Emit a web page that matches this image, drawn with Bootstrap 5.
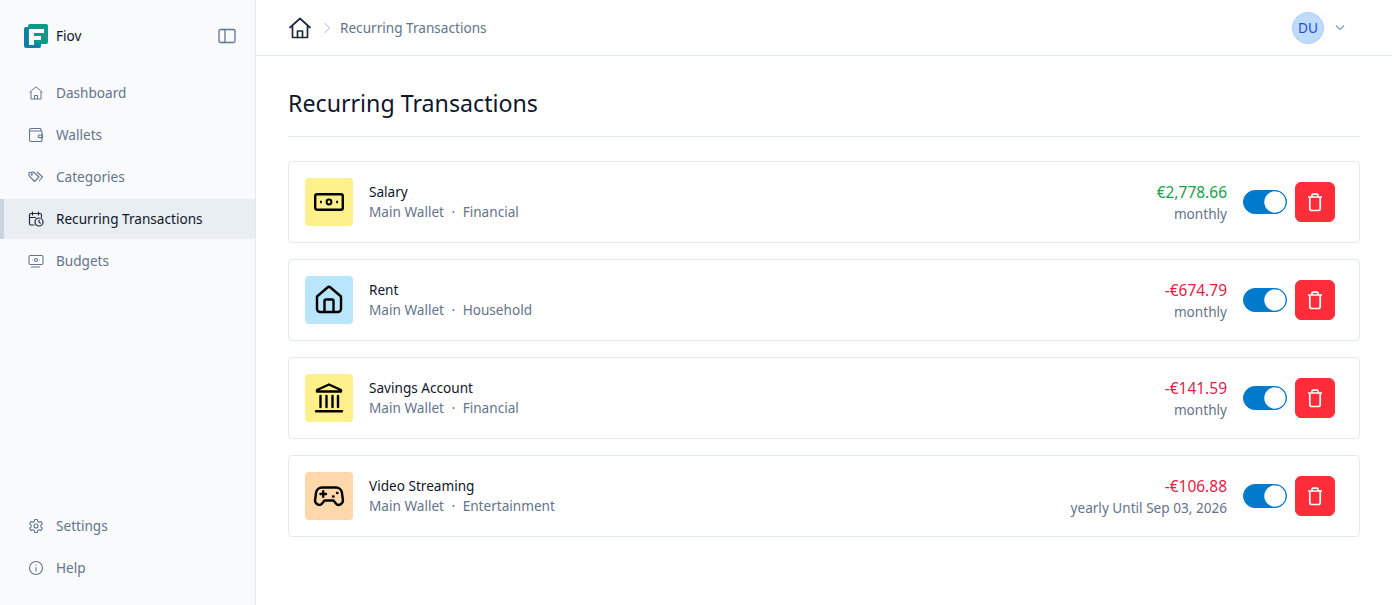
<!DOCTYPE html>
<html lang="en">
<head>
  <meta charset="UTF-8">
  <meta name="viewport" content="width=device-width, initial-scale=1">
  <title>Recurring Transactions</title>
  <link href="https://cdn.jsdelivr.net/npm/bootstrap@5.3.0/dist/css/bootstrap.min.css" rel="stylesheet">
  <style>
    body { font-family: "Noto Sans", "Open Sans", sans-serif; font-size: 13.6px; color: #0f172a; height: 605px; overflow: hidden; }
    .side-bar { width: 256px; height: 605px; background: #f8fafc; border-right: 1px solid #e2e8f0; }
    .brand-row { height: 73px; padding: 0 19px 1px 24px; }
    .brand-name { margin-left: 8px; }
    .side-link { height: 40px; margin-bottom: 2px; padding-left: 24px; color: #64748b; text-decoration: none; border-left: 4px solid transparent; }
    .side-link svg { margin-right: 12px; flex: none; }
    .side-link.current { background: #e9eef2; border-left-color: #cbd5e1; color: #0f172a; }
    .side-end { height: 15px; }
    .top-bar { height: 56px; border-bottom: 1px solid #e2e8f0; padding: 0 46px 0 32px; }
    .crumb-text { color: #64748b; padding-top: 2px; }
    .crumb-sep { margin: 0 9px 0 11px; }
    .user-dot { width: 32px; height: 32px; background: #bfdbfe; color: #1d4ed8; border: 1px solid #a9cdfb; padding-top: 1px; }
    .user-caret { margin-left: 10px; }
    .page-area { padding: 32px; }
    .page-title { font-size: 23.2px; font-weight: 400; line-height: 30px; margin: 0 0 24px; padding-bottom: 18px; border-bottom: 1px solid #e2e8f0; }
    .tx-card { height: 82px; border: 1px solid #e2e8f0; border-radius: 4px; padding: 16px 24px 16px 16px; margin-bottom: 16px; }
    .tx-icon { width: 48px; height: 48px; border-radius: 4px; margin-right: 16px; }
    .tint-yellow { background: #fef08a; }
    .tint-blue { background: #bae6fd; }
    .tint-orange { background: #fed7aa; }
    .tx-name { line-height: 20px; }
    .tx-meta { line-height: 20px; color: #64748b; }
    .tx-dot { margin: 0 7.5px; }
    .tx-right { padding-top: 2px; }
    .tx-amount { font-size: 15.5px; line-height: 20px; }
    .amt-in { color: #16a34a; }
    .amt-out { color: #e11d48; }
    .tx-when { line-height: 20px; margin-top: 2px; color: #64748b; }
    .tx-switch { margin: 0 8px 0 16px; padding: 0; min-height: 0; height: 24px; }
    .tx-switch .form-check-input { width: 44px; height: 24px; margin: 0; float: none; display: block; background-color: #007acc; border: 1px solid #007acc; background-image: url("data:image/svg+xml,%3csvg xmlns='http://www.w3.org/2000/svg' viewBox='-4 -4 8 8'%3e%3ccircle r='3.9' fill='%23fff'/%3e%3c/svg%3e"); }
    .del-btn { width: 40px; height: 40px; padding: 0; background: #ff2d3a; border-color: #ff2d3a; border-radius: 6px; }
  </style>
</head>
<body>
  <div class="d-flex">
    <aside class="side-bar d-flex flex-column flex-shrink-0">
      <div class="brand-row d-flex align-items-center">
        <svg width="24" height="24" viewBox="0 0 24 24">
          <rect x="0" y="3" width="17" height="21" rx="2" fill="#0e7fa6"/>
          <rect x="4" y="0" width="20" height="20" rx="2" fill="#0b9a8a"/>
          <path d="M5 5h15v4H10v3h7v4h-7v5H5z" fill="#fff"/>
        </svg>
        <span class="brand-name">Fiov</span>
        <svg class="ms-auto" width="18" height="16" viewBox="0 0 18 16" fill="none" stroke="#64748b" stroke-width="1.3">
          <rect x="1" y="1.5" width="16" height="13" rx="1.5"/><path d="M7 1.5v13"/>
        </svg>
      </div>
      <nav class="d-flex flex-column flex-grow-1">
        <a href="#" class="side-link d-flex align-items-center">
          <svg width="16" height="16" viewBox="0 0 16 16" fill="none" stroke="#64748b" stroke-width="1" stroke-linejoin="round"><path d="M1.500 7.500 8 1.800l6.500 5.700M3 6.500V14h10V6.500"/><path d="M6.500 14v-3.500h3V14"/></svg>
          Dashboard
        </a>
        <a href="#" class="side-link d-flex align-items-center">
          <svg width="16" height="16" viewBox="0 0 16 16" fill="none" stroke="#64748b" stroke-width="1.100" stroke-linejoin="round"><path d="M13 4V2.500a1 1 0 0 0-1-1H3a1.500 1.500 0 0 0-1.500 1.500V13A1.500 1.500 0 0 0 3 14.500h9.500A1.500 1.500 0 0 0 14 13V5a1 1 0 0 0-1-1H2"/><path d="M14.500 8h-3a1.300 1.300 0 0 0 0 2.600h3z"/></svg>
          Wallets
        </a>
        <a href="#" class="side-link d-flex align-items-center">
          <svg width="16" height="16" viewBox="0 0 16 16" fill="none" stroke="#64748b" stroke-width="1.100" stroke-linejoin="round"><path d="M1 3.500v3.200l5.500 5.800 4.500-4.500L5.500 3z"/><circle cx="3.800" cy="5.500" r=".6"/><path d="m9 3 5.500 5-3.500 4"/></svg>
          Categories
        </a>
        <a href="#" class="side-link current d-flex align-items-center">
          <svg width="16" height="16" viewBox="0 0 16 16" fill="none" stroke="#1e293b" stroke-width="1.200" stroke-linecap="round"><path d="M6 14H3a1.500 1.500 0 0 1-1.500-1.500V4A1.500 1.500 0 0 1 3 2.500h9A1.500 1.500 0 0 1 13.500 4v2M4.500 1v3M10.500 1v3M1.500 6.500h6"/><circle cx="11" cy="11" r="4"/><path d="M11 9v2l1.200 1"/></svg>
          Recurring Transactions
        </a>
        <a href="#" class="side-link d-flex align-items-center">
          <svg width="16" height="16" viewBox="0 0 16 16" fill="none" stroke="#64748b" stroke-width="1.100"><rect x="1" y="2.500" width="14" height="9" rx="1.500"/><circle cx="8" cy="7" r="1.500"/><path d="M4 7h.5M11.500 7h.5M3 14h9"/></svg>
          Budgets
        </a>
        <a href="#" class="side-link d-flex align-items-center mt-auto">
          <svg width="16" height="16" viewBox="0 0 16 16" fill="none" stroke="#64748b" stroke-width="1.100" stroke-linejoin="round"><path d="M6.700 1.500h2.600l.4 1.900 1.500.8 1.800-.7 1.300 2.300-1.400 1.300v1.800l1.400 1.300-1.300 2.300-1.800-.7-1.500.8-.4 1.900H6.700l-.4-1.900-1.500-.8-1.800.7-1.300-2.300 1.400-1.300V7.100L1.700 5.800 3 3.500l1.800.7 1.500-.8z"/><circle cx="8" cy="8" r="2"/></svg>
          Settings
        </a>
        <a href="#" class="side-link d-flex align-items-center">
          <svg width="16" height="16" viewBox="0 0 16 16" fill="none" stroke="#64748b" stroke-width="1.100"><circle cx="8" cy="8" r="6.500"/><path d="M8 7.200V11.500M8 4.500v1"/></svg>
          Help
        </a>
        <div class="side-end"></div>
      </nav>
    </aside>
    <main class="flex-grow-1">
      <header class="top-bar d-flex align-items-center">
        <svg width="24" height="24" viewBox="0 0 24 24" fill="none" stroke="#1e293b" stroke-width="1.700" stroke-linejoin="round" stroke-linecap="round"><path d="M2 11.500 12 2.500l10 9M4.500 9.500V21.500h15V9.500"/><path d="M9.500 21.500V15h5v6.500"/></svg>
        <svg class="crumb-sep" width="8" height="12" viewBox="0 0 8 12" fill="none" stroke="#cbd5e1" stroke-width="1.300"><path d="m1.500 1 5 5-5 5"/></svg>
        <span class="crumb-text">Recurring Transactions</span>
        <div class="ms-auto d-flex align-items-center">
          <span class="user-dot rounded-circle d-flex align-items-center justify-content-center">DU</span>
          <svg class="user-caret" width="12" height="8" viewBox="0 0 12 8" fill="none" stroke="#94a3b8" stroke-width="1.500"><path d="m2 1.500 4 4 4-4"/></svg>
        </div>
      </header>
      <div class="page-area">
        <h1 class="page-title">Recurring Transactions</h1>

        <div class="tx-card d-flex align-items-center bg-white">
          <div class="tx-icon tint-yellow d-flex align-items-center justify-content-center">
            <svg width="32" height="32" viewBox="0 0 32 32" fill="none" stroke="#000" stroke-width="2.400"><rect x="2.200" y="8.200" width="27.600" height="15.600" rx="2"/><circle cx="16" cy="16" r="2.400" stroke-width="2"/><path d="M7 16h1.800M23.200 16H25"/></svg>
          </div>
          <div>
            <div class="tx-name">Salary</div>
            <div class="tx-meta">Main Wallet<span class="tx-dot">·</span>Financial</div>
          </div>
          <div class="tx-right ms-auto text-end">
            <div class="tx-amount amt-in">€2,778.66</div>
            <div class="tx-when">monthly</div>
          </div>
          <div class="form-check form-switch tx-switch"><input class="form-check-input" type="checkbox" checked></div>
          <button class="btn btn-danger del-btn d-flex align-items-center justify-content-center" type="button">
            <svg width="20" height="20" viewBox="0 0 20 20" fill="none" stroke="#fff" stroke-width="1.700" stroke-linejoin="round"><path d="M7 5V3.200a1 1 0 0 1 1-1h4a1 1 0 0 1 1 1V5M3 5h14M4.800 5v11.500a2 2 0 0 0 2 2h6.400a2 2 0 0 0 2-2V5"/></svg>
          </button>
        </div>

        <div class="tx-card d-flex align-items-center bg-white">
          <div class="tx-icon tint-blue d-flex align-items-center justify-content-center">
            <svg width="32" height="32" viewBox="0 0 32 32" fill="none" stroke="#000" stroke-width="2.400" stroke-linejoin="round"><path d="M4 12.500 14.500 3.500a2.200 2.200 0 0 1 3 0L28 12.500V25a3 3 0 0 1-3 3H7a3 3 0 0 1-3-3z"/><path d="M11.500 28V17a1.500 1.500 0 0 1 1.500-1.500h6a1.500 1.500 0 0 1 1.500 1.500v11"/></svg>
          </div>
          <div>
            <div class="tx-name">Rent</div>
            <div class="tx-meta">Main Wallet<span class="tx-dot">·</span>Household</div>
          </div>
          <div class="tx-right ms-auto text-end">
            <div class="tx-amount amt-out">-€674.79</div>
            <div class="tx-when">monthly</div>
          </div>
          <div class="form-check form-switch tx-switch"><input class="form-check-input" type="checkbox" checked></div>
          <button class="btn btn-danger del-btn d-flex align-items-center justify-content-center" type="button">
            <svg width="20" height="20" viewBox="0 0 20 20" fill="none" stroke="#fff" stroke-width="1.700" stroke-linejoin="round"><path d="M7 5V3.200a1 1 0 0 1 1-1h4a1 1 0 0 1 1 1V5M3 5h14M4.800 5v11.500a2 2 0 0 0 2 2h6.400a2 2 0 0 0 2-2V5"/></svg>
          </button>
        </div>

        <div class="tx-card d-flex align-items-center bg-white">
          <div class="tx-icon tint-yellow d-flex align-items-center justify-content-center">
            <svg width="32" height="32" viewBox="0 0 32 32" fill="none" stroke="#000" stroke-width="2.400"><path d="M16 2.500 28 8v1.500H4V8z" stroke-linejoin="round"/><path d="M7.500 14v11M13.500 14v11M19.500 14v11M25 14v11M3 29.200h26" stroke-linecap="round"/></svg>
          </div>
          <div>
            <div class="tx-name">Savings Account</div>
            <div class="tx-meta">Main Wallet<span class="tx-dot">·</span>Financial</div>
          </div>
          <div class="tx-right ms-auto text-end">
            <div class="tx-amount amt-out">-€141.59</div>
            <div class="tx-when">monthly</div>
          </div>
          <div class="form-check form-switch tx-switch"><input class="form-check-input" type="checkbox" checked></div>
          <button class="btn btn-danger del-btn d-flex align-items-center justify-content-center" type="button">
            <svg width="20" height="20" viewBox="0 0 20 20" fill="none" stroke="#fff" stroke-width="1.700" stroke-linejoin="round"><path d="M7 5V3.200a1 1 0 0 1 1-1h4a1 1 0 0 1 1 1V5M3 5h14M4.800 5v11.500a2 2 0 0 0 2 2h6.400a2 2 0 0 0 2-2V5"/></svg>
          </button>
        </div>

        <div class="tx-card d-flex align-items-center bg-white">
          <div class="tx-icon tint-orange d-flex align-items-center justify-content-center">
            <svg width="32" height="32" viewBox="0 0 32 32" fill="none" stroke="#000" stroke-width="2.400" stroke-linejoin="round" stroke-linecap="round"><path d="M9 7.500h14a6 6 0 0 1 5.900 5l1 7.500c.5 4-4.500 6.500-7 3.500L20.500 20.500H11.500L9.100 23.500c-2.500 3-7.500.5-7-3.500l1-7.500A6 6 0 0 1 9 7.500z"/><path d="M7.500 14h5.500M10.200 11.200v5.600M20 16.500h.5M24 13h.5"/></svg>
          </div>
          <div>
            <div class="tx-name">Video Streaming</div>
            <div class="tx-meta">Main Wallet<span class="tx-dot">·</span>Entertainment</div>
          </div>
          <div class="tx-right ms-auto text-end">
            <div class="tx-amount amt-out">-€106.88</div>
            <div class="tx-when">yearly Until Sep 03, 2026</div>
          </div>
          <div class="form-check form-switch tx-switch"><input class="form-check-input" type="checkbox" checked></div>
          <button class="btn btn-danger del-btn d-flex align-items-center justify-content-center" type="button">
            <svg width="20" height="20" viewBox="0 0 20 20" fill="none" stroke="#fff" stroke-width="1.700" stroke-linejoin="round"><path d="M7 5V3.200a1 1 0 0 1 1-1h4a1 1 0 0 1 1 1V5M3 5h14M4.800 5v11.500a2 2 0 0 0 2 2h6.400a2 2 0 0 0 2-2V5"/></svg>
          </button>
        </div>
      </div>
    </main>
  </div>
  <script src="https://cdn.jsdelivr.net/npm/bootstrap@5.3.0/dist/js/bootstrap.bundle.min.js"></script>
</body>
</html>
